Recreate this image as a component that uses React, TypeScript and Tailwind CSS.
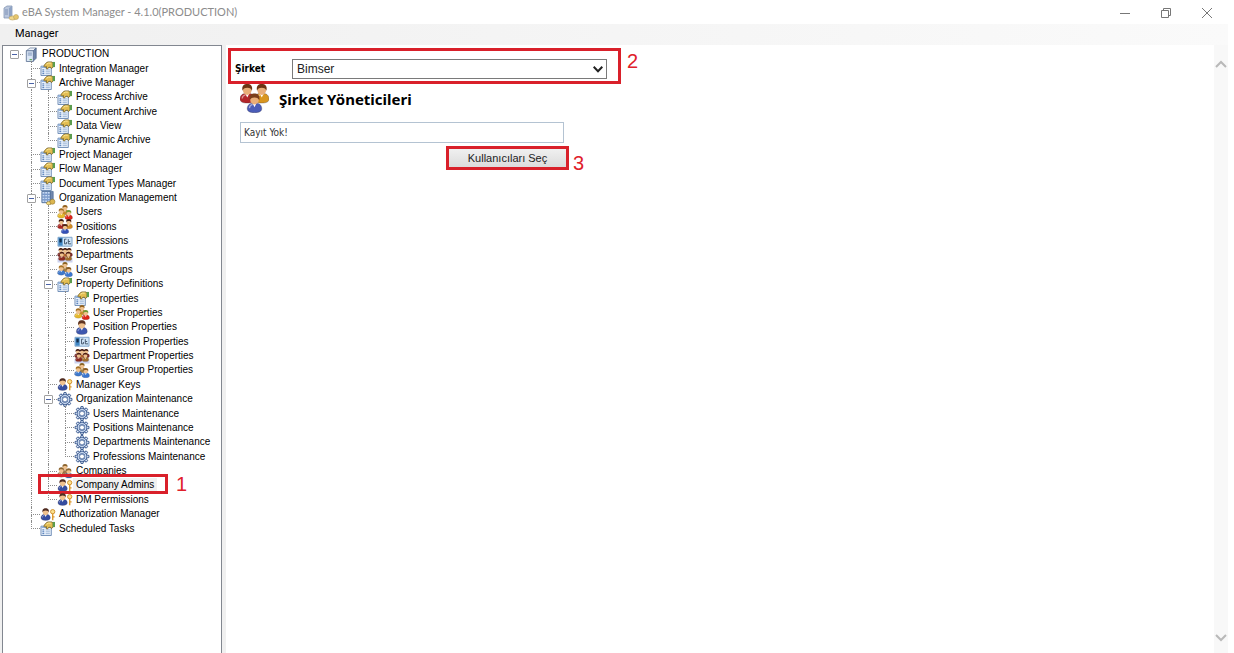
import type { ReactNode } from 'react';

type IconName =
    | 'server'
    | 'props'
    | 'org'
    | 'users'
    | 'positions'
    | 'card'
    | 'departments'
    | 'groups'
    | 'person'
    | 'key'
    | 'gear'
    | 'companies';

type TreeItem = {
    depth: number;
    icon: IconName;
    label: string;
    open?: boolean;
    selected?: boolean;
};

const items: TreeItem[] = [
    { depth: 0, icon: 'server', label: 'PRODUCTION', open: true },
    { depth: 1, icon: 'props', label: 'Integration Manager' },
    { depth: 1, icon: 'props', label: 'Archive Manager', open: true },
    { depth: 2, icon: 'props', label: 'Process Archive' },
    { depth: 2, icon: 'props', label: 'Document Archive' },
    { depth: 2, icon: 'props', label: 'Data View' },
    { depth: 2, icon: 'props', label: 'Dynamic Archive' },
    { depth: 1, icon: 'props', label: 'Project Manager' },
    { depth: 1, icon: 'props', label: 'Flow Manager' },
    { depth: 1, icon: 'props', label: 'Document Types Manager' },
    { depth: 1, icon: 'org', label: 'Organization Management', open: true },
    { depth: 2, icon: 'users', label: 'Users' },
    { depth: 2, icon: 'positions', label: 'Positions' },
    { depth: 2, icon: 'card', label: 'Professions' },
    { depth: 2, icon: 'departments', label: 'Departments' },
    { depth: 2, icon: 'groups', label: 'User Groups' },
    { depth: 2, icon: 'props', label: 'Property Definitions', open: true },
    { depth: 3, icon: 'props', label: 'Properties' },
    { depth: 3, icon: 'users', label: 'User Properties' },
    { depth: 3, icon: 'person', label: 'Position Properties' },
    { depth: 3, icon: 'card', label: 'Profession Properties' },
    { depth: 3, icon: 'departments', label: 'Department Properties' },
    { depth: 3, icon: 'groups', label: 'User Group Properties' },
    { depth: 2, icon: 'key', label: 'Manager Keys' },
    { depth: 2, icon: 'gear', label: 'Organization Maintenance', open: true },
    { depth: 3, icon: 'gear', label: 'Users Maintenance' },
    { depth: 3, icon: 'gear', label: 'Positions Maintenance' },
    { depth: 3, icon: 'gear', label: 'Departments Maintenance' },
    { depth: 3, icon: 'gear', label: 'Professions Maintenance' },
    { depth: 2, icon: 'companies', label: 'Companies' },
    { depth: 2, icon: 'key', label: 'Company Admins', selected: true },
    { depth: 2, icon: 'key', label: 'DM Permissions' },
    { depth: 1, icon: 'key', label: 'Authorization Manager' },
    { depth: 1, icon: 'props', label: 'Scheduled Tasks' },
];

// true when another item of the given depth follows below in the same branch
function continues(index: number, depth: number) {
    for (let i = index + 1; i < items.length; i++) {
        if (items[i].depth < depth) return false;
        if (items[i].depth === depth) return true;
    }
    return false;
}

function Bust({
    x,
    y,
    s = 1,
    hair,
    shirt,
    skin = '#efc18e',
}: {
    x: number;
    y: number;
    s?: number;
    hair: string;
    shirt: string;
    skin?: string;
}) {
    return (
        <g transform={`translate(${x} ${y}) scale(${s})`}>
            <path
                d="M0 8.300C0 6.200 1.600 5 4 5s4 1.200 4 3.300C8 9.900 6.500 10.500 4 10.500S0 9.900 0 8.300z"
                fill={shirt}
                stroke="#2b2333"
                strokeOpacity="0.4"
                strokeWidth="0.4"
            />
            <path d="M1.200 8C1.300 6.800 2 6.200 3 6" stroke="#fff" strokeOpacity="0.5" strokeWidth="0.7" fill="none" />
            <path d="M3 5.500 4 7.500 5 5.500z" fill="#fff" />
            <ellipse cx="4" cy="3.300" rx="2.400" ry="2.700" fill={skin} />
            <path
                d="M1.400 3.700C.8 1 2.200 0 4 0s3.200 1 2.600 3.700C6.200 2.700 5.600 2.100 4 2.100s-2.200.6-2.600 1.600z"
                fill={hair}
            />
        </g>
    );
}

const drawings: Record<IconName, ReactNode> = {
    server: (
        <>
            <path d="M3 4 7 1h6.500L10.500 4z" fill="#eef3fa" stroke="#6c7f9c" strokeWidth="0.800" />
            <path d="M10.500 4l3-3v11l-3 3z" fill="#6f86aa" stroke="#4d6284" strokeWidth="0.800" />
            <path d="M3 4h7.500v11.500H3z" fill="#dbe6f5" stroke="#5c7192" strokeWidth="0.900" />
            <path d="M4.500 6.500H9M4.500 8.500H9" stroke="#7890b3" />
            <path d="M6.500 13.500H9" stroke="#58a848" strokeWidth="1.200" />
        </>
    ),
    props: (
        <>
            <path d="M.5 5.500h11v10H.5z" fill="#eaf2fc" stroke="#6b8ab4" />
            <path d="M1 6h10v1.500H1z" fill="#8fb1de" />
            <path d="M2 9.500h2M2 11.500h2M2 13.500h2" stroke="#3869ad" />
            <path d="M5.500 9.500H10M5.500 11.500H10M5.500 13.500H10" stroke="#9ab3d3" />
            <path
                d="M3.500 5.500C4.500 3.500 6 1.500 8 1h4l1.500 1v4.500L11.500 8l-1-1.500-2 .5-1 1.500-1.500-.5.500-2-2 .5z"
                fill="#e3bd52"
                stroke="#6b5719"
                strokeWidth="0.800"
            />
            <path d="M6.500 3.500 8.500 2.200H11" stroke="#fff0a8" fill="none" />
            <path d="M13 1h2.500v5.500H13z" fill="#5b9c4e" />
        </>
    ),
    org: (
        <>
            <path d="M1.500 1.500h9v12h-9z" fill="#c9dbf5" stroke="#4c6c98" />
            <path d="M10.500 1.500h3v10l-3 2z" fill="#7288ad" stroke="#4c6c98" strokeWidth="0.800" />
            <path d="M2 4.500h8M2 7.500h8M2 10.500h8" stroke="#5078b4" />
            <path d="M4.500 2v11M7.500 2v11" stroke="#7f9ecb" />
            <ellipse cx="9" cy="14" rx="2.800" ry="1.700" fill="#f4dc84" stroke="#8f7429" strokeWidth="0.600" />
            <circle cx="12.700" cy="12.500" r="2.700" fill="#dcb650" stroke="#8f7429" strokeWidth="0.600" />
        </>
    ),
    users: (
        <>
            <Bust x={4} y={0} hair="#95631f" shirt="#c88a2c" />
            <Bust x={0} y={3.5} hair="#a36f23" shirt="#e6b92c" />
            <Bust x={8} y={5.300} hair="#6f9a35" shirt="#dc2519" />
        </>
    ),
    positions: (
        <>
            <Bust x={0} y={0} hair="#40180e" shirt="#a92620" />
            <Bust x={8} y={0} hair="#40180e" shirt="#d28c25" />
            <Bust x={4} y={5.300} hair="#4c2417" shirt="#3450b7" />
        </>
    ),
    card: (
        <>
            <path d="M.5 3.500h15v9.500H.5z" fill="#cfe4f8" stroke="#7ba1c8" />
            <path d="M1 4h4.500v8.500H1z" fill="#3f86c4" />
            <path d="M2 5h2.500v4H2z" fill="#132d4c" />
            <path d="M9.500 5.500h-2v5h2v-2M11.500 5.500v5h3M11.500 8h2" stroke="#41536a" fill="none" />
        </>
    ),
    departments: (
        <>
            <path d="M0 11h16v4.500H0z" fill="#ccd3ee" />
            <Bust x={0} y={0} s={0.9} hair="#3a120b" shirt="#7d2926" />
            <Bust x={4.500} y={0} s={0.9} hair="#3a120b" shirt="#b96b2b" />
            <Bust x={8.800} y={0} s={0.9} hair="#3a120b" shirt="#7d2926" />
            <Bust x={1} y={4} s={0.9} hair="#4b1c12" shirt="#8c2a20" />
            <Bust x={8} y={4} s={0.9} hair="#4b1c12" shirt="#a16c2a" />
        </>
    ),
    groups: (
        <>
            <Bust x={4} y={0} hair="#8a6424" shirt="#a27e44" />
            <Bust x={0} y={3.500} hair="#a87428" shirt="#3f79cb" />
            <Bust x={8} y={5.300} hair="#8a5c22" shirt="#3a76d0" />
        </>
    ),
    person: <Bust x={2} y={0.300} s={1.450} hair="#5f3420" shirt="#3e57ae" />,
    key: (
        <>
            <Bust x={0.500} y={1.200} s={1.250} hair="#4f2c22" shirt="#354da0" />
            <circle cx="13" cy="5" r="2.300" fill="#fbe08c" stroke="#d08f2a" />
            <path d="M13 7v7M13.500 10.500H15" stroke="#dd9a30" strokeWidth="1.500" />
        </>
    ),
    gear: (
        <>
            {[0, 45, 90, 135, 180, 225, 270, 315].map((angle) => (
                <path
                    key={angle}
                    d="M6.300 3.500 6.900.6h2.200l.6 2.900z"
                    transform={`rotate(${angle} 8 8)`}
                    fill="#dfe9f8"
                    stroke="#35558c"
                    strokeWidth="1"
                />
            ))}
            <circle cx="8" cy="8" r="4.200" fill="none" stroke="#35558c" strokeWidth="2.600" />
            <circle cx="8" cy="8" r="4.100" fill="none" stroke="#cfdef4" strokeWidth="1.400" />
            <circle cx="8" cy="8" r="2.600" fill="#fff" stroke="#45669c" strokeWidth="0.900" />
        </>
    ),
    companies: (
        <>
            <Bust x={4} y={0} hair="#8d6631" shirt="#a0784a" />
            <Bust x={0} y={3.500} hair="#8d6631" shirt="#a9834d" />
            <Bust x={8} y={4.500} hair="#8d6631" shirt="#3f69ae" />
        </>
    ),
};

function Icon({ name }: { name: IconName }) {
    return (
        <svg viewBox="0 0 16 16" className="h-[15px] w-4 shrink-0 self-center" aria-hidden="true">
            {drawings[name]}
        </svg>
    );
}

function Callout({ children }: { children: ReactNode }) {
    return <span className="font-[Liberation_Sans,sans-serif] text-[20px] leading-5 text-[#e0202a]">{children}</span>;
}

function TreeRow({ item, index }: { item: TreeItem; index: number }) {
    const ancestors = Array.from({ length: item.depth }, (_, i) => i);

    return (
        <li className="relative flex min-h-0 flex-1 items-stretch whitespace-nowrap">
            {/* Guides of the parent levels */}
            {ancestors.map((depth) => (
                <span key={depth} className="flex w-[17px] shrink-0 pl-2">
                    {depth > 0 && continues(index, depth) && (
                        <span className="border-l border-dotted border-[#8c8c8c]" />
                    )}
                </span>
            ))}

            {/* Elbow + expander */}
            <span className="relative flex w-[17px] shrink-0 flex-col pl-2">
                <span
                    className={
                        item.depth > 0
                            ? 'flex-1 border-b border-l border-dotted border-[#8c8c8c]'
                            : 'flex-1 border-b border-dotted border-[#8c8c8c]'
                    }
                />
                <span
                    className={
                        item.depth > 0 && continues(index, item.depth)
                            ? 'flex-1 border-l border-dotted border-[#8c8c8c]'
                            : 'flex-1'
                    }
                />
                {item.open && (
                    <button
                        type="button"
                        aria-label={`Collapse ${item.label}`}
                        className="absolute top-[3px] left-1 flex h-[9px] w-[9px] items-center justify-center rounded-[1px] border border-[#a0a0a0] bg-white"
                    >
                        <span className="h-px w-[5px] bg-[#4b63a7]" />
                    </button>
                )}
            </span>

            <Icon name={item.icon} />
            <a
                href="#"
                className={
                    item.selected
                        ? 'self-center bg-[#f0f0f0] px-[3px] leading-[14px]'
                        : 'self-center px-[3px] leading-[14px]'
                }
            >
                {item.label}
            </a>

            {item.selected && (
                <span className="pointer-events-none absolute -top-1 left-8 flex items-center gap-2">
                    <span className="h-5 w-[130px] border-3 border-[#d9202a]" />
                    <Callout>1</Callout>
                </span>
            )}
        </li>
    );
}

function TitleBar() {
    return (
        <header className="flex h-6 items-center bg-white pt-px pr-[22px] pl-[3px]">
            <svg viewBox="0 0 16 16" className="h-4 w-4" aria-hidden="true">
                <path d="M1 3 4 1h5v10l-3 2H1z" fill="#b9c6dc" stroke="#8798b5" strokeWidth="0.800" />
                <path d="M6 3 9 1v10l-3 2z" fill="#8fa3c4" />
                <path d="M2 5h3M2 7h3M2 9h3" stroke="#6e86ad" strokeWidth="0.800" />
                <ellipse cx="9.500" cy="13" rx="3.500" ry="2" fill="#f0d78c" stroke="#b8a163" strokeWidth="0.600" />
                <ellipse cx="13" cy="12" rx="2.500" ry="2.500" fill="#e7c66b" stroke="#b8a163" strokeWidth="0.600" />
            </svg>
            <h1 className="ml-[3px] flex-1 font-[Lato,sans-serif] text-[11px] text-[#8c8c8c]">
                eBA System Manager - 4.1.0(PRODUCTION)
            </h1>
            <div className="flex items-center gap-[31px] text-[#777]">
                <button type="button" aria-label="Minimize">
                    <svg viewBox="0 0 10 10" className="h-[10px] w-[10px]" stroke="currentColor">
                        <path d="M0 5.500h10" />
                    </svg>
                </button>
                <button type="button" aria-label="Restore">
                    <svg viewBox="0 0 10 10" className="h-[10px] w-[10px]" fill="none" stroke="currentColor">
                        <path d="M.5 2.500h7v7h-7zM2.500 2.500v-2h7v7h-2" />
                    </svg>
                </button>
                <button type="button" aria-label="Close">
                    <svg viewBox="0 0 10 10" className="h-[10px] w-[10px]" stroke="currentColor">
                        <path d="M0 0l10 10M10 0 0 10" />
                    </svg>
                </button>
            </div>
        </header>
    );
}

function ScrollBar() {
    return (
        <div className="flex w-[14px] shrink-0 flex-col items-center justify-between bg-[#f8f8f8] pt-[15px] pb-[11px] text-[#b9b9b9]">
            <button type="button" aria-label="Scroll up">
                <svg viewBox="0 0 12 8" className="h-2 w-3" fill="none" stroke="currentColor" strokeWidth="2">
                    <path d="M1 7l5-5 5 5" />
                </svg>
            </button>
            <button type="button" aria-label="Scroll down">
                <svg viewBox="0 0 12 8" className="h-2 w-3" fill="none" stroke="currentColor" strokeWidth="2">
                    <path d="M1 1l5 5 5-5" />
                </svg>
            </button>
        </div>
    );
}

function CompanyAdmins() {
    return (
        <main className="flex-1 bg-white pt-[3px] pl-[2px]">
            {/* Company picker */}
            <div className="flex items-start gap-[6px]">
                <div className="flex h-9 w-[393px] items-start border-3 border-[#d9202a] pt-2 pl-1">
                    <label
                        htmlFor="company"
                        className="w-[57px] font-[DejaVu_Sans_Condensed,DejaVu_Sans,sans-serif] text-[10px] leading-5 font-bold text-black"
                    >
                        Şirket
                    </label>
                    <div className="relative">
                        <select
                            id="company"
                            className="block h-5 w-[315px] appearance-none border border-[#7a7a7a] bg-white px-1 font-[Liberation_Sans,sans-serif] text-[12px] leading-[18px] text-[#222]"
                        >
                            <option>Bimser</option>
                        </select>
                        <svg
                            viewBox="0 0 10 7"
                            className="pointer-events-none absolute top-[7px] right-1 h-[7px] w-[10px]"
                            fill="none"
                            stroke="#222"
                            strokeWidth="2"
                        >
                            <path d="M.7.8 5 5.200 9.300.8" />
                        </svg>
                    </div>
                </div>
                <div className="pt-[2px]">
                    <Callout>2</Callout>
                </div>
            </div>

            <div className="flex items-center gap-[10px] pl-3">
                <svg viewBox="0 0 16 16" className="h-[29px] w-[29px]" aria-hidden="true">
                    <Bust x={0} y={0} hair="#6b3413" shirt="#b3262a" skin="#e9ae78" />
                    <Bust x={8} y={0} hair="#6b3413" shirt="#d9961f" skin="#e9ae78" />
                    <Bust x={4} y={5.300} hair="#7b3f1a" shirt="#4a5cb8" skin="#e9ae78" />
                </svg>
                <h2 className="font-[Noto_Sans,sans-serif] text-[15px] leading-5 font-bold text-black">
                    Şirket Yöneticileri
                </h2>
            </div>

            <table className="mt-[9px] ml-3 w-[324px] border border-[#b4c3d2]">
                <tbody>
                    <tr>
                        <td className="h-5 px-[3px] font-[DejaVu_Sans_Condensed,DejaVu_Sans,sans-serif] text-[10px] leading-4 text-[#333]">
                            Kayıt Yok!
                        </td>
                    </tr>
                </tbody>
            </table>

            <div className="mt-[3px] ml-[218px] flex items-start gap-1">
                <button
                    type="button"
                    className="h-6 w-[123px] border-3 border-[#d9202a] bg-linear-to-b from-[#f0f0f0] to-[#dcdcdc] font-[Liberation_Sans,sans-serif] text-[11px] leading-[18px] text-[#222]"
                >
                    Kullanıcıları Seç
                </button>
                <div className="pt-[6px]">
                    <Callout>3</Callout>
                </div>
            </div>
        </main>
    );
}

export default function App() {
    return (
        <div className="flex min-h-screen flex-col bg-white">
            <TitleBar />
            <nav className="mr-[6px] flex h-[21px] items-center bg-linear-to-r from-[#f0f0f0] to-[#fafafa] pl-[15px]">
                <button type="button" className="font-[Roboto,sans-serif] text-[11px] text-black">
                    Manager
                </button>
            </nav>
            <div className="mr-[6px] flex flex-1 bg-[#f0f0f0] pl-[2px]">
                <aside className="mr-1 w-[220px] shrink-0 border border-b-0 border-[#828790] bg-white pt-px pl-[3px]">
                    <ul className="flex h-[489px] flex-col font-[Liberation_Sans,sans-serif] text-[10px] text-black">
                        {items.map((item, index) => (
                            <TreeRow key={item.label} item={item} index={index} />
                        ))}
                    </ul>
                </aside>
                <CompanyAdmins />
                <ScrollBar />
            </div>
        </div>
    );
}
